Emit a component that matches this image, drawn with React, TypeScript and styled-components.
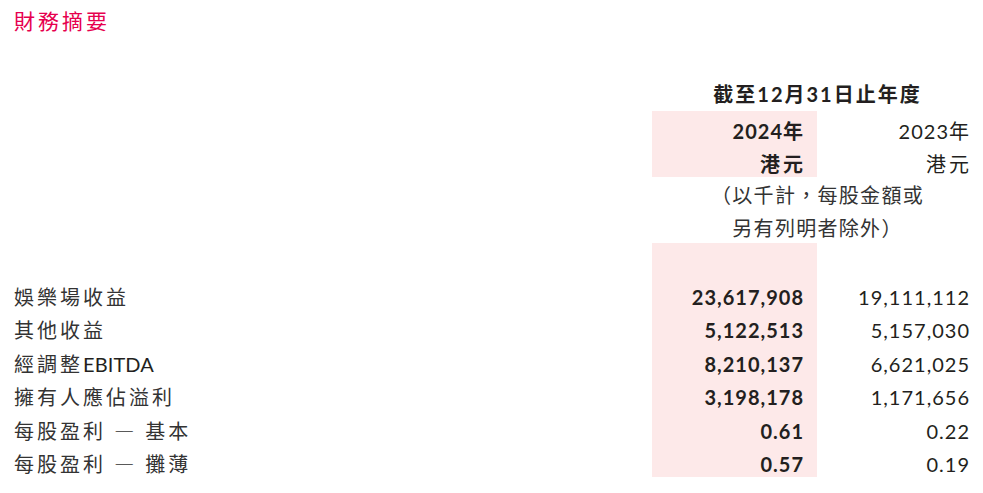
import React from "react";
import styled, { createGlobalStyle } from "styled-components";

const GlobalStyle = createGlobalStyle`
  html, body {
    margin: 0;
    padding: 0;
    background: #ffffff;
  }
  body {
    font-family: "Lato", "Noto Sans CJK TC", sans-serif;
    color: #231f20;
  }
`;

const Page = styled.div`
  width: 983px;
  padding-top: 6px;
`;

const Title = styled.h1`
  margin: 0 0 43px;
  padding-left: 14px;
  font-size: 21px;
  line-height: 30px;
  font-weight: 400;
  letter-spacing: 3px;
  color: #e6004e;
`;

const Table = styled.div`
  display: grid;
  grid-template-columns: 1fr 165px 166px;
  padding-left: 14px;
  font-size: 20px;
`;

const Period = styled.div`
  grid-column: 2 / 4;
  height: 32px;
  line-height: 30px;
  text-align: center;
  font-weight: 700;
  letter-spacing: 2px;
`;

const Note = styled.div`
  grid-column: 2 / 4;
  height: 33px;
  box-sizing: border-box;
  padding-top: 5px;
  line-height: 26px;
  text-align: center;
  letter-spacing: 1.3px;
  color: #333;
`;

const Blank = styled.div<{ $h: number }>`
  height: ${(p) => p.$h}px;
`;

const Value = styled.div<{ $current?: boolean; $h?: number }>`
  height: ${(p) => p.$h ?? 33.4}px;
  box-sizing: border-box;
  padding: 7px 13px 0 0;
  line-height: 26px;
  text-align: right;
  letter-spacing: 1px;
  font-weight: ${(p) => (p.$current ? 700 : 400)};
  background: ${(p) => (p.$current ? "#fde9e9" : "transparent")};
`;

const Unit = styled(Value)`
  letter-spacing: 3px;
  padding-right: 11px;
`;

const Label = styled.div`
  height: 33.4px;
  box-sizing: border-box;
  padding-top: 7px;
  line-height: 26px;
  letter-spacing: 3px;
  color: #333;
`;

const Latin = styled.span`
  letter-spacing: 0.1px;
  color: #231f20;
`;

// full-width dash between the EPS label and its kind
const Dash = styled.span`
  font-family: "Noto Sans CJK TC", sans-serif;
  font-feature-settings: "fwid" 1;
  font-weight: 300;
`;

const rows: { label: React.ReactNode; current: string; prior: string }[] = [
  { label: "娛樂場收益", current: "23,617,908", prior: "19,111,112" },
  { label: "其他收益", current: "5,122,513", prior: "5,157,030" },
  {
    label: (
      <>
        經調整<Latin>EBITDA</Latin>
      </>
    ),
    current: "8,210,137",
    prior: "6,621,025",
  },
  { label: "擁有人應佔溢利", current: "3,198,178", prior: "1,171,656" },
  {
    label: (
      <>
        每股盈利 <Dash>—</Dash> 基本
      </>
    ),
    current: "0.61",
    prior: "0.22",
  },
  {
    label: (
      <>
        每股盈利 <Dash>—</Dash> 攤薄
      </>
    ),
    current: "0.57",
    prior: "0.19",
  },
];

export default function App() {
  return (
    <Page>
      <GlobalStyle />
      <Title>財務摘要</Title>
      <Table>
        <Blank $h={32} />
        <Period>截至12月31日止年度</Period>

        <Blank $h={33} />
        <Value $current $h={33}>
          2024年
        </Value>
        <Value $h={33}>2023年</Value>

        <Blank $h={33} />
        <Unit $current $h={33}>
          港元
        </Unit>
        <Unit $h={33}>港元</Unit>

        <Blank $h={33} />
        <Note>（以千計，每股金額或</Note>
        <Blank $h={33} />
        <Note>另有列明者除外）</Note>

        <Blank $h={34} />
        <Value $current $h={34} />
        <Blank $h={34} />

        {rows.map((r, i) => (
          <React.Fragment key={i}>
            <Label>{r.label}</Label>
            <Value $current>{r.current}</Value>
            <Value>{r.prior}</Value>
          </React.Fragment>
        ))}
      </Table>
    </Page>
  );
}
